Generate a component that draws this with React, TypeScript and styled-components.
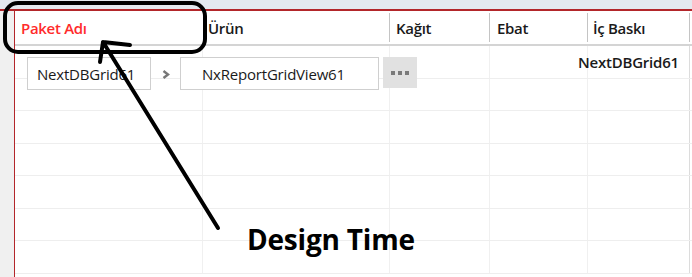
import React from 'react';
import styled, { createGlobalStyle } from 'styled-components';

const GlobalStyle = createGlobalStyle`
  body {
    margin: 0;
    background: #ffffff;
    font-family: 'Open Sans', 'Noto Sans', sans-serif;
  }
`;

const Screen = styled.div`
  position: relative;
  width: 692px;
  height: 277px;
  overflow: hidden;
  background: #ffffff;
  display: flex;
  flex-direction: column;
`;

const TopBar = styled.div`
  height: 9px;
  background: #e4e9ef;
  border-bottom: 2px solid #b3262a;
  flex-shrink: 0;
`;

const Main = styled.div`
  flex: 1;
  display: flex;
  min-height: 0;
`;

const SideStrip = styled.div`
  width: 14px;
  background: #f0f0f0;
  border-right: 1px solid #b3262a;
  flex-shrink: 0;
`;

const Grid = styled.div`
  flex: 1;
  display: flex;
  flex-direction: column;
`;

const HeaderRow = styled.div`
  display: grid;
  grid-template-columns: 190px 185px 100px 98px 102px 2px;
  height: 33px;
  border-bottom: 2px solid #d4d4d4;
  flex-shrink: 0;
`;

const HeaderCell = styled.div<{ $accent?: boolean; $pad?: number }>`
  position: relative;
  display: flex;
  align-items: center;
  padding-left: ${(p) => p.$pad ?? 4}px;
  font-size: 15px;
  font-weight: 600;
  letter-spacing: -0.3px;
  color: ${(p) => (p.$accent ? '#ff2b2b' : '#1a1a1a')};
  &::after {
    content: '';
    position: absolute;
    right: 0;
    top: 2px;
    bottom: 2px;
    width: 1px;
    background: #c4c4c4;
  }
`;

const Body = styled.div`
  position: relative;
  flex: 1;
  display: flex;
  flex-direction: column;
`;

const Row = styled.div`
  display: grid;
  grid-template-columns: 188px 187px 100px 98px 102px 2px;
  height: 32.5px;
  border-bottom: 1px solid #eeeeee;
  box-sizing: border-box;
  flex-shrink: 0;
`;

const Cell = styled.div<{ $last?: boolean }>`
  border-right: 1px solid ${(p) => (p.$last ? '#dcdcdc' : '#f0f0f0')};
`;

const ValueCell = styled(Cell)`
  position: relative;
`;

const RightValue = styled.span`
  position: absolute;
  right: 10px;
  top: 6px;
  white-space: nowrap;
  font-size: 15px;
  font-weight: 600;
  letter-spacing: -0.2px;
  color: #1a1a1a;
`;

const Editor = styled.div`
  position: absolute;
  left: 12px;
  top: 11px;
  display: flex;
  align-items: center;
`;

const EditBox = styled.div<{ $w: number; $pad: number }>`
  width: ${(p) => p.$w}px;
  height: 33px;
  box-sizing: border-box;
  border: 1px solid #cfcfcf;
  background: #ffffff;
  display: flex;
  align-items: center;
  padding-left: ${(p) => p.$pad}px;
  font-size: 15px;
  letter-spacing: -0.2px;
  color: #1a1a1a;
`;

const Chevron = styled.div`
  width: 29px;
  display: flex;
  justify-content: center;
  align-items: center;
  padding-top: 2px;
`;

const DotsButton = styled.div`
  margin-left: 4px;
  width: 34px;
  height: 31px;
  background: #e1e1e1;
  display: flex;
  align-items: center;
  justify-content: center;
  gap: 3px;
  margin-top: -2px;
`;

const Dot = styled.span`
  width: 4px;
  height: 4px;
  background: #7a7a7a;
`;

const Overlay = styled.svg`
  position: absolute;
  left: 0;
  top: 0;
  pointer-events: none;
`;

const Caption = styled.div`
  position: absolute;
  left: 247px;
  top: 220px;
  font-family: 'Open Sans', 'Noto Sans', sans-serif;
  font-weight: 700;
  font-size: 28px;
  letter-spacing: -0.2px;
  color: #000000;
`;

const headers = [
  { label: 'Paket Adı', accent: true, pad: 6 },
  { label: 'Ürün', pad: 3 },
  { label: 'Kağıt', pad: 6 },
  { label: 'Ebat', pad: 7 },
  { label: 'İç Baskı', pad: 5 },
];

const App: React.FC = () => {
  const rows = Array.from({ length: 7 });
  return (
    <>
      <GlobalStyle />
      <Screen>
        <TopBar />
        <Main>
          <SideStrip />
          <Grid>
            <HeaderRow>
              {headers.map((h) => (
                <HeaderCell key={h.label} $accent={h.accent} $pad={h.pad}>
                  {h.label}
                </HeaderCell>
              ))}
              <div />
            </HeaderRow>
            <Body>
              {rows.map((_, i) => (
                <Row key={i}>
                  <Cell />
                  <Cell />
                  <Cell />
                  <Cell />
                  <ValueCell $last>
                    {i === 0 && <RightValue>NextDBGrid61</RightValue>}
                  </ValueCell>
                  <div />
                </Row>
              ))}
              <Editor>
                <EditBox $w={124} $pad={9}>NextDBGrid61</EditBox>
                <Chevron>
                  <svg width="8" height="9" viewBox="0 0 8 9">
                    <path d="M1.5 1 L6 4.5 L1.5 8" fill="none" stroke="#777" strokeWidth="2.4" />
                  </svg>
                </Chevron>
                <EditBox $w={199} $pad={21}>NxReportGridView61</EditBox>
                <DotsButton>
                  <Dot />
                  <Dot />
                  <Dot />
                </DotsButton>
              </Editor>
            </Body>
          </Grid>
        </Main>
        <Overlay width="692" height="277" viewBox="0 0 692 277">
          <rect x="5" y="3" width="200" height="49" rx="13" fill="none" stroke="#000" strokeWidth="4" />
          <path
            d="M218 228 L103 42 M103 42 L130 45 M103 42 L100 62"
            fill="none"
            stroke="#000"
            strokeWidth="4"
            strokeLinecap="round"
          />
        </Overlay>
        <Caption>Design Time</Caption>
      </Screen>
    </>
  );
};

export default App;
